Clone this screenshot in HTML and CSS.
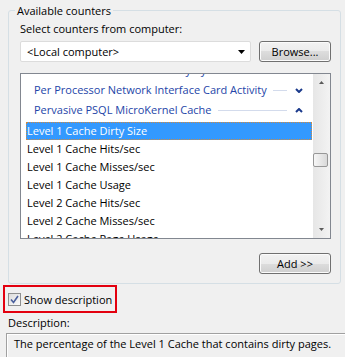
FILE: index.html
```html
<!DOCTYPE html>
<html lang="en">
<head>
    <meta charset="UTF-8">
    <title>Add Counters</title>
    <link rel="stylesheet" href="styles.css">
</head>
<body>
    <fieldset class="counters">
        <legend>Available counters</legend>
        <div class="label">Select counters from computer:</div>
        <div class="computer-row">
            <div class="combo">
                <span>&lt;Local computer&gt;</span>
                <svg width="7" height="4" viewBox="0 0 7 4"><path d="M0 0H7L3.5 4Z" fill="#000"/></svg>
            </div>
            <button class="btn">Browse...</button>
        </div>

        <div class="list">
            <div class="rows">
                <div class="group-row">
                    <span>Per Processor Network Activity Cycles</span>
                    <i class="rule"></i>
                    <svg class="chev" width="8" height="5" viewBox="0 0 8 5"><path d="M1 1L4 4L7 1" fill="none" stroke="#1b3a8c" stroke-width="2"/></svg>
                </div>
                <div class="group-row">
                    <span>Per Processor Network Interface Card Activity</span>
                    <i class="rule"></i>
                    <svg class="chev" width="8" height="5" viewBox="0 0 8 5"><path d="M1 1L4 4L7 1" fill="none" stroke="#1b3a8c" stroke-width="2"/></svg>
                </div>
                <div class="group-row">
                    <span>Pervasive PSQL MicroKernel Cache</span>
                    <i class="rule"></i>
                    <svg class="chev" width="8" height="5" viewBox="0 0 8 5"><path d="M1 4L4 1L7 4" fill="none" stroke="#1b3a8c" stroke-width="2"/></svg>
                </div>
                <div class="items">
                    <div class="item selected">Level 1 Cache Dirty Size</div>
                    <div class="item">Level 1 Cache Hits/sec</div>
                    <div class="item">Level 1 Cache Misses/sec</div>
                    <div class="item">Level 1 Cache Usage</div>
                    <div class="item">Level 2 Cache Hits/sec</div>
                    <div class="item">Level 2 Cache Misses/sec</div>
                    <div class="item">Level 2 Cache Page Usage</div>
                </div>
            </div>
            <div class="scrollbar">
                <div class="sb-btn"><svg width="5" height="3" viewBox="0 0 5 3"><path d="M0 3H5L2.5 0Z" fill="#5a5a5a"/></svg></div>
                <div class="sb-track"><div class="sb-thumb"></div></div>
                <div class="sb-btn"><svg width="5" height="3" viewBox="0 0 5 3"><path d="M0 0H5L2.5 3Z" fill="#5a5a5a"/></svg></div>
            </div>
        </div>

        <div class="add-row">
            <button class="btn">Add &gt;&gt;</button>
        </div>
    </fieldset>

    <label class="show-desc">
        <span class="check">
            <svg width="9" height="9" viewBox="0 0 9 9"><path d="M1 4.5L3.5 7.5L8 1" fill="none" stroke="#4a5f9c" stroke-width="1.6"/></svg>
        </span>
        <span>Show description</span>
    </label>

    <div class="desc-label">Description:</div>
    <div class="desc-box">The percentage of the Level 1 Cache that contains dirty pages.</div>
</body>
</html>
```
FILE: styles.css
```css
body {
    margin: 0;
    background: #f0f0f0;
    font-family: "Open Sans", "Noto Sans", sans-serif;
    font-size: 11px;
    line-height: 15px;
    color: #000;
    overflow: hidden;
}
.counters {
    margin: 3px 4px 0 8px;
    padding: 0 9px 9px 11px;
    border: 1px solid #d5dfe5;
    border-radius: 3px;
    min-width: 0;
}
.counters legend {
    margin-left: -5px;
    padding: 0 2px;
    line-height: 15px;
}
.label {
    margin-top: 3px;
}
.computer-row {
    display: flex;
    gap: 8px;
    margin-top: 5px;
}
.combo {
    flex: 1;
    height: 21px;
    box-sizing: border-box;
    border: 1px solid #dcdcdc;
    border-radius: 2px;
    background: #fff;
    display: flex;
    align-items: center;
    justify-content: space-between;
    padding: 0 5px 0 6px;
}
.btn {
    width: 72px;
    height: 21px;
    border: 1px solid #707070;
    border-radius: 3px;
    background: linear-gradient(#f2f2f2 0%, #ebebeb 50%, #dddddd 50%, #cfcfcf 100%);
    box-shadow: inset 0 0 0 1px #fbfbfb;
    font: inherit;
    color: #000;
    padding: 0;
}
.list {
    margin-top: 11px;
    height: 166px;
    box-sizing: border-box;
    border: 1px solid #828790;
    background: #fff;
    display: flex;
}
.rows {
    flex: 1;
    overflow: hidden;
}
.group-row {
    height: 20px;
    line-height: 20px;
    display: flex;
    align-items: center;
    padding-left: 13px;
    color: #2445a8;
}
.group-row:first-child {
    margin-top: -14px;
}
.rule {
    flex: 1;
    height: 1px;
    margin-left: 6px;
    background: #d3dbec;
}
.chev {
    margin: 0 10px 0 8px;
}
.items {
    margin-top: 2px;
}
.item {
    height: 18px;
    line-height: 16px;
    box-sizing: border-box;
    border: 1px solid transparent;
    margin: 0 1px 0 5px;
    white-space: nowrap;
}
.item.selected {
    background: #3399ff;
    border: 1px dotted #d08a40;
    color: #fff;
}
.scrollbar {
    width: 17px;
    display: flex;
    flex-direction: column;
    background: linear-gradient(to right, #e6e6e6, #f3f3f3);
}
.sb-btn {
    height: 17px;
    display: flex;
    align-items: center;
    justify-content: center;
}
.sb-track {
    flex: 1;
}
.sb-thumb {
    margin-top: 62px;
    width: 15px;
    height: 14px;
    box-sizing: border-box;
    border: 1px solid #979797;
    border-radius: 2px;
    background: linear-gradient(to right, #f6f6f6, #d9d9d9);
}
.add-row {
    display: flex;
    justify-content: flex-end;
    margin-top: 14px;
}
.show-desc {
    margin: 1px 0 0 3px;
    width: max-content;
    height: 28px;
    box-sizing: border-box;
    border: 2px solid #e3000f;
    display: flex;
    align-items: center;
    gap: 3px;
    padding: 0 3px 0 3px;
    white-space: nowrap;
}
.check {
    width: 13px;
    height: 13px;
    box-sizing: border-box;
    border: 1px solid #8e8f8f;
    background: linear-gradient(135deg, #dcdcdc, #fbfbfb);
    display: flex;
    align-items: center;
    justify-content: center;
}
.desc-label {
    margin: 2px 0 0 8px;
}
.desc-box {
    margin: 3px -10px 0 6px;
    height: 21px;
    border-top: 1px solid #a0a0a0;
    border-left: 1px solid #a0a0a0;
    box-shadow: inset 1px 1px 0 #fff;
    padding: 2px 0 0 7px;
    white-space: nowrap;
}
```
